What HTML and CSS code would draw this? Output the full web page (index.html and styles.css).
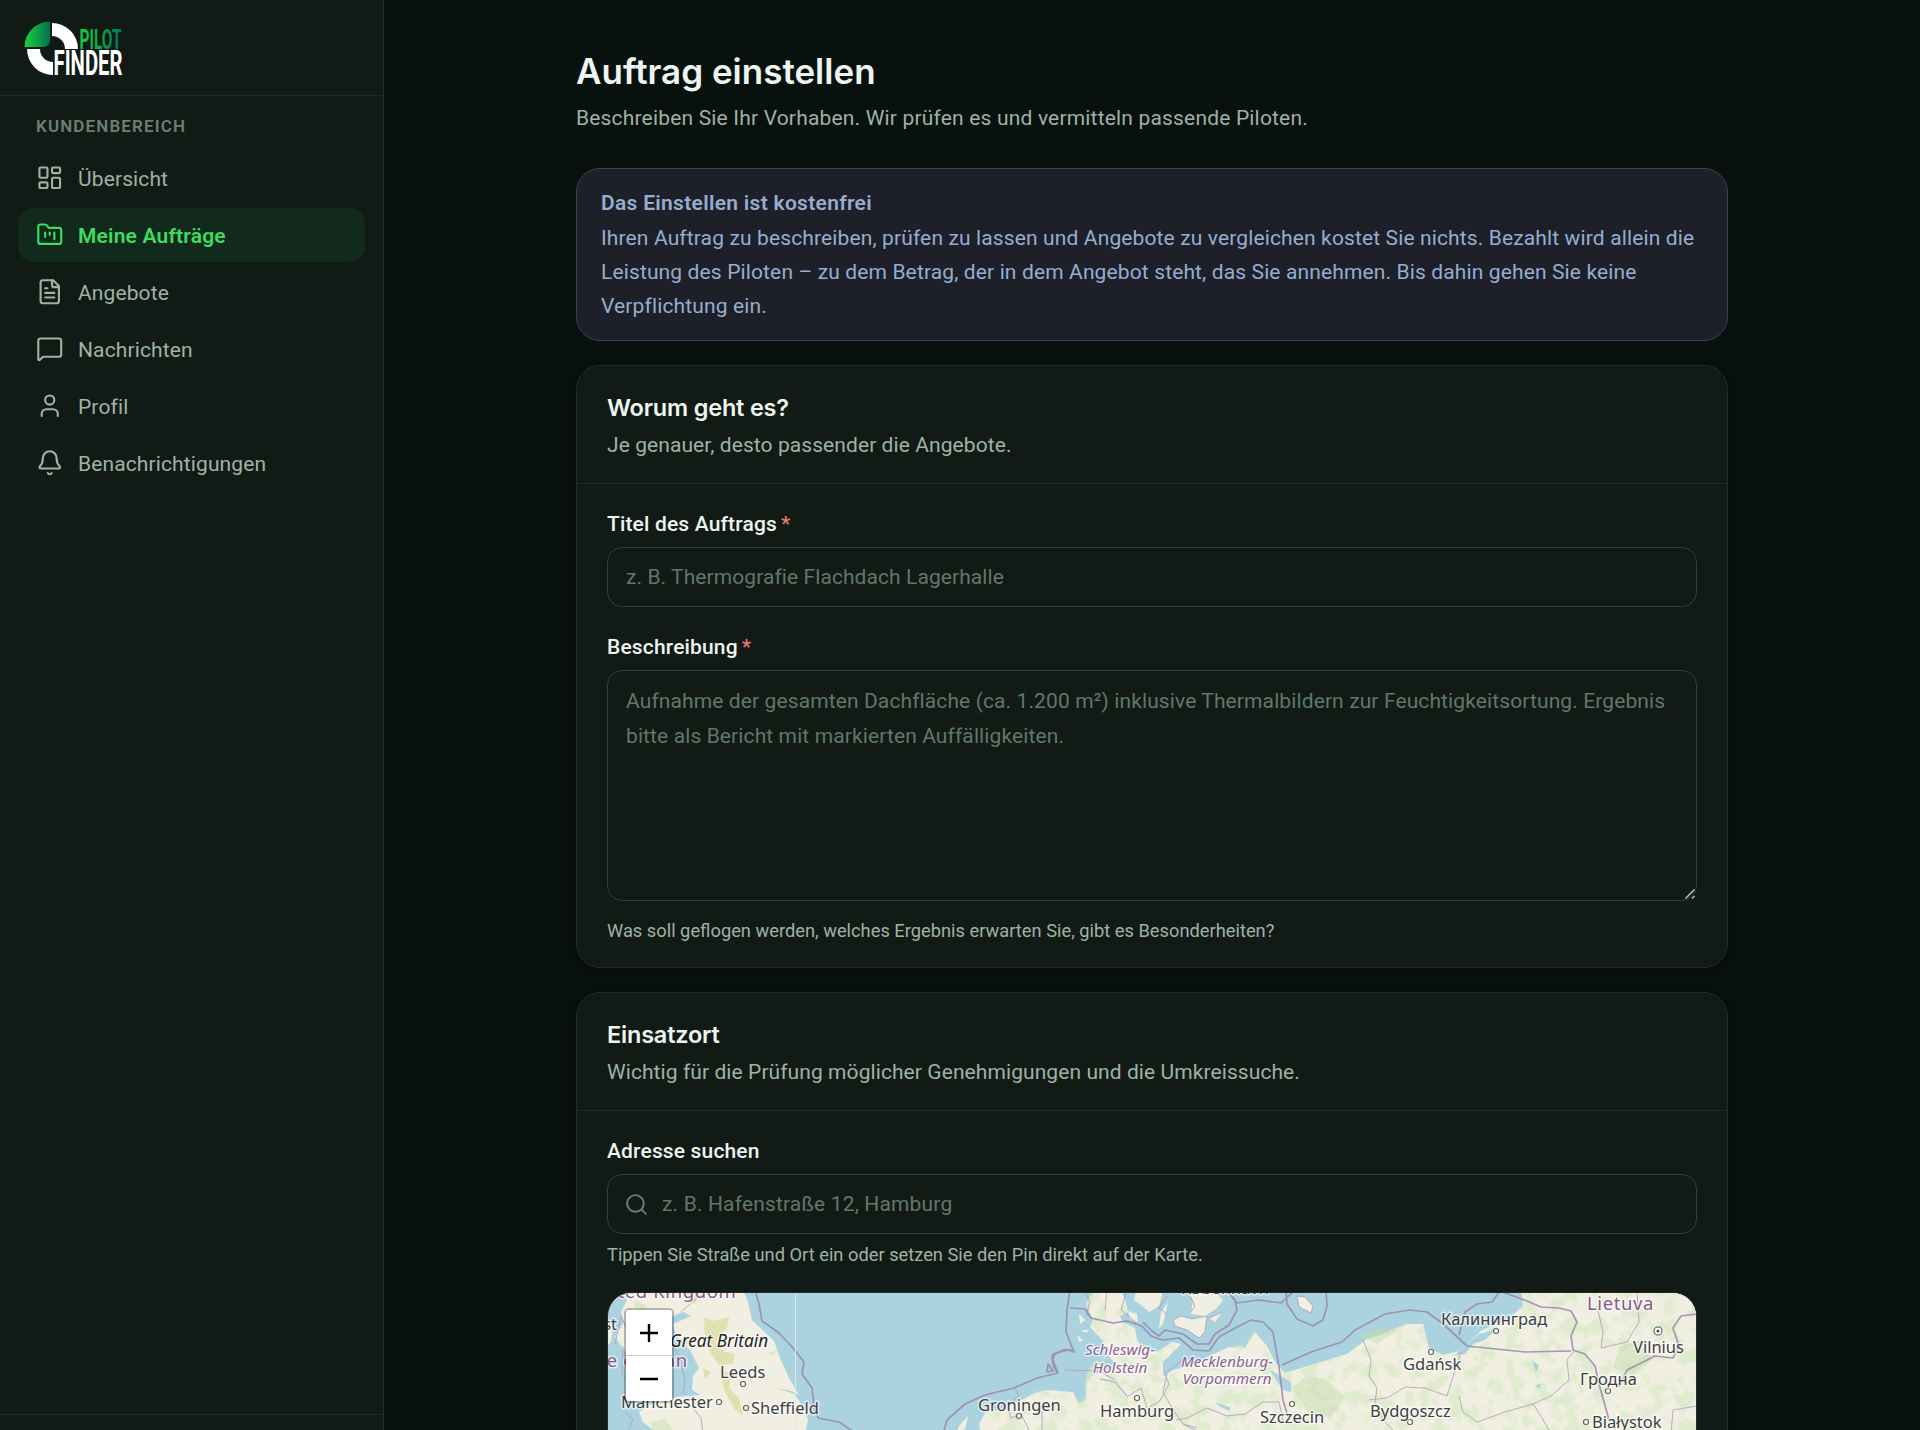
FILE: index.html
```html
<!DOCTYPE html>
<html lang="de">
<head>
    <meta charset="UTF-8">
    <meta name="viewport" content="width=device-width, initial-scale=1.0">
    <title>Auftrag einstellen – Pilotfinder</title>
    <link rel="stylesheet" href="styles.css">
</head>
<body>
    <aside class="sidebar">
        <div class="sidebar-header">
            <svg class="logo" width="100" height="56" viewBox="0 0 100 56">
                <defs>
                    <linearGradient id="logo-blade" x1="0" y1="0" x2="1" y2="0">
                        <stop offset="0" stop-color="#18d13d"/>
                        <stop offset="1" stop-color="#03714f"/>
                    </linearGradient>
                    <linearGradient id="logo-word" x1="0" y1="0" x2="1" y2="0">
                        <stop offset="0" stop-color="#17cf3a"/>
                        <stop offset="1" stop-color="#04755a"/>
                    </linearGradient>
                </defs>
                <path fill="url(#logo-blade)" d="M.5 27A25.500 25.500 0 0 1 26 1.500V20a7 7 0 0 1-7 7z"/>
                <path fill="#fff" d="M28 3a26 26 0 0 1 26 26H41A13 13 0 0 0 28 16z"/>
                <path fill="#fff" d="M3 29h13a13 13 0 0 0 13 13v13A26 26 0 0 1 3 29z"/>
                <text class="logo-pilot" x="55.500" y="28.800" textLength="42" lengthAdjust="spacingAndGlyphs" fill="url(#logo-word)">PILOT</text>
                <text class="logo-finder" x="29.500" y="54.800" textLength="69" lengthAdjust="spacingAndGlyphs">FINDER</text>
            </svg>
        </div>
        <nav class="nav">
            <p class="nav-label">Kundenbereich</p>
            <a class="nav-item" href="#">
                <svg class="icon" viewBox="0 0 24 24"><rect x="3" y="3" width="7" height="9" rx="1"/><rect x="14" y="3" width="7" height="5" rx="1"/><rect x="14" y="12" width="7" height="9" rx="1"/><rect x="3" y="16" width="7" height="5" rx="1"/></svg>
                <span>Übersicht</span>
            </a>
            <a class="nav-item active" href="#">
                <svg class="icon" viewBox="0 0 24 24"><path d="M4 20h16a2 2 0 0 0 2-2V8a2 2 0 0 0-2-2h-7.930a2 2 0 0 1-1.660-.900l-.820-1.200A2 2 0 0 0 7.930 3H4a2 2 0 0 0-2 2v13c0 1.100.900 2 2 2z"/><path d="M8 10v4"/><path d="M12 10v2"/><path d="M16 10v6"/></svg>
                <span>Meine Aufträge</span>
            </a>
            <a class="nav-item" href="#">
                <svg class="icon" viewBox="0 0 24 24"><path d="M15 2H6a2 2 0 0 0-2 2v16a2 2 0 0 0 2 2h12a2 2 0 0 0 2-2V7z"/><path d="M14 2v4a2 2 0 0 0 2 2h4"/><path d="M10 9H8"/><path d="M16 13H8"/><path d="M16 17H8"/></svg>
                <span>Angebote</span>
            </a>
            <a class="nav-item" href="#">
                <svg class="icon" viewBox="0 0 24 24"><path d="M22 17a2 2 0 0 1-2 2H6.830a2 2 0 0 0-1.420.590l-2.200 2.200A.710.710 0 0 1 2 21.290V5a2 2 0 0 1 2-2h16a2 2 0 0 1 2 2z"/></svg>
                <span>Nachrichten</span>
            </a>
            <a class="nav-item" href="#">
                <svg class="icon" viewBox="0 0 24 24"><path d="M19 21v-2a4 4 0 0 0-4-4H9a4 4 0 0 0-4 4v2"/><circle cx="12" cy="7" r="4"/></svg>
                <span>Profil</span>
            </a>
            <a class="nav-item" href="#">
                <svg class="icon" viewBox="0 0 24 24"><path d="M10.268 21a2 2 0 0 0 3.464 0"/><path d="M3.262 15.326A1 1 0 0 0 4 17h16a1 1 0 0 0 .740-1.673C19.410 13.956 18 12.499 18 8A6 6 0 0 0 6 8c0 4.499-1.411 5.956-2.738 7.326"/></svg>
                <span>Benachrichtigungen</span>
            </a>
        </nav>
        <div class="sidebar-footer"></div>
    </aside>

    <main class="main">
        <div class="content">
            <header class="page-header">
                <h1>Auftrag einstellen</h1>
                <p class="lead">Beschreiben Sie Ihr Vorhaben. Wir prüfen es und vermitteln passende Piloten.</p>
            </header>

            <div class="notice">
                <p class="notice-title">Das Einstellen ist kostenfrei</p>
                <p class="notice-text">Ihren Auftrag zu beschreiben, prüfen zu lassen und Angebote zu vergleichen kostet Sie nichts. Bezahlt wird allein die Leistung des Piloten – zu dem Betrag, der in dem Angebot steht, das Sie annehmen. Bis dahin gehen Sie keine Verpflichtung ein.</p>
            </div>

            <section class="card">
                <div class="card-header">
                    <h2>Worum geht es?</h2>
                    <p class="lead-small">Je genauer, desto passender die Angebote.</p>
                </div>
                <div class="card-body">
                    <div class="field">
                        <label for="titel">Titel des Auftrags<span class="required">*</span></label>
                        <input type="text" id="titel" placeholder="z. B. Thermografie Flachdach Lagerhalle">
                    </div>
                    <div class="field">
                        <label for="beschreibung">Beschreibung<span class="required">*</span></label>
                        <div class="textarea-wrap">
                            <textarea id="beschreibung" placeholder="Aufnahme der gesamten Dachfläche (ca. 1.200 m²) inklusive Thermalbildern zur Feuchtigkeitsortung. Ergebnis bitte als Bericht mit markierten Auffälligkeiten."></textarea>
                            <svg class="grip" width="12" height="12" viewBox="0 0 12 12"><path d="M1.500 10.500l9-9M8 10.500l2.500-2.500"/></svg>
                        </div>
                        <p class="hint hint-textarea">Was soll geflogen werden, welches Ergebnis erwarten Sie, gibt es Besonderheiten?</p>
                    </div>
                </div>
            </section>

            <section class="card">
                <div class="card-header">
                    <h2>Einsatzort</h2>
                    <p class="lead-small">Wichtig für die Prüfung möglicher Genehmigungen und die Umkreissuche.</p>
                </div>
                <div class="card-body">
                    <div class="field">
                        <label for="adresse">Adresse suchen</label>
                        <div class="search">
                            <svg class="search-icon" viewBox="0 0 24 24"><circle cx="11" cy="11" r="8"/><path d="m21 21-4.300-4.300"/></svg>
                            <input type="text" id="adresse" placeholder="z. B. Hafenstraße 12, Hamburg">
                        </div>
                        <p class="hint hint-ort">Tippen Sie Straße und Ort ein oder setzen Sie den Pin direkt auf der Karte.</p>
                    </div>
                    <div class="map">
                        <svg class="map-tiles" width="1088" height="498" viewBox="1 1 1088 498">
                            <defs>
                                <filter id="forest" x="0" y="0" width="100%" height="100%">
                                    <feTurbulence type="fractalNoise" baseFrequency=".07" numOctaves="5" seed="8"/>
                                    <feColorMatrix values="0 0 0 0 .68  0 0 0 0 .82  0 0 0 0 .56  0 5 0 0 -2.300"/>
                                </filter>
                                <clipPath id="land-east">
                                    <path d="M489 -5L479 12 486 28 483 35 496 49 500 62 484 72 478 88 477 106 470 110 463 98 428 99 417 107 395 117 378 121 372 132 360 142H1095V-5H914L916 14 900 28 875 38 862 50 852 59 836 63 822 56 816 32 800 32 775 42 760 47 740 62 720 68 678 81 666 70 655 50 645 38 640 52 622 55 600 65 590 72 566 78 556 84 556 70 570 54 565 50 550 60 530 48 528 36 515 30 510 26 520 20 512 0 515 -5z"/>
                                </clipPath>
                            </defs>
                            <!-- Land -->
                            <g class="land">
                                <path d="M15 -5L20 8 14 20 17 30 8 45 20 62 40 48 52 30 76 20 84 24 66 32 69 44 76 50 84 60 92 76 86 84 85 98 93 103 70 105 46 111 32 120 36 130 46 138 48 142H198L201 128 196 115 188 102 168 96 184 99 192 103 182 86 173 66 167 49 145 28 141 10 135 -5z"/>
                                <path d="M0 32L6 36 4 50 0 54z"/>
                                <path d="M489 -5L479 12 486 28 483 35 496 49 500 62 510 74 484 84 479 92 479 108 472 112 466 100 440 98 428 101 417 107 395 117 378 121 372 132 374 142H1095V-5H914L916 14 900 28 875 38 862 50 852 59 836 63 822 56 816 32 800 32 775 42 760 47 740 62 720 68 678 81 668 70 660 54 648 40 644 46 638 56 622 55 600 65 590 72 566 78 556 84 556 70 568 58 574 52 565 50 550 60 535 55 530 48 528 36 515 30 513 24 521 20 518 8 512 -5z"/>
                                <path d="M530 -5L527 8 535 14 542 20 552 14 557 -5z"/>
                                <path d="M521 19L530 22 531 30 523 27z"/>
                                <path d="M561 10L556 32 552 36 554 20z"/>
                                <path d="M576 -5L586 8 584 22 598 24 610 16 616 8 608 0 606 -5z"/>
                                <path d="M566 28L574 24 585 27 600 24 598 40 592 46 580 38 568 34z"/>
                                <path d="M602 26L616 20 608 30z"/>
                                <path d="M690 4L698 5 706 14 704 21 692 15z"/>
                                <path d="M472 22L478 28 473 32zM474 38L482 38 479 41zM470 43L476 48 472 50z"/>
                                <path d="M352 134L361 124 358 137 350 142z"/>
                            </g>
                            <rect class="forest" x="370" y="0" width="720" height="142" filter="url(#forest)" clip-path="url(#land-east)"/>
                            <!-- Hochland in England -->
                            <g class="upland">
                                <path d="M97 25L106 29 122 25 120 36 108 50 118 60 128 62 126 72 112 73 104 62 98 46z"/>
                                <path d="M112 76L124 82 122 96 132 106 136 124 128 118 118 100z"/>
                                <path d="M80 -4L92 2 88 12 78 8zM74 46L84 50 78 54zM96 76L104 80 98 88z"/>
                            </g>
                            <g class="woods">
                                <path d="M28 8L40 14 36 18 27 15zM160 62L170 57 166 64zM42 131L58 127 66 138 48 140z"/>
                                <path d="M1012 55L1034 48 1044 68 1026 82 1006 76z"/>
                                <path d="M684 96L700 84 720 88 738 104 724 126 700 118zM752 44L770 36 790 38 770 52z"/>
                            </g>
                            <g class="lakes">
                                <path d="M852 59L872 42 888 38 878 48 866 52 858 62 848 63z"/>
                                <path d="M663 78L684 90 684 100 676 98 668 86z"/>
                                <path d="M925 68L932 74 929 80zM928 94L935 91 932 97zM608 110L624 116 622 119 612 114z"/>
                                <path d="M493 87L508 90 520 104" class="river"/>
                            </g>
                            <!-- Grenzen -->
                            <g class="border">
                                <path d="M148 -2L152 12 155 29 172 41 186 56 197 70 195 82 205 96 207 114 211 126 232 130 250 142"/>
                                <path d="M336 142L340 128 358 112 378 103 407 96 430 86 451 81 445 66 446 62 461 58 467 60 459 40 460 18 463 -2"/>
                                <path d="M451 81C443 72 444 62 454 59Q461 56 467 60M441 72L446 79 440 80z"/>
                                <path d="M463 16L478 17 484 26 506 31 520 29 535 34 544 44 555 48 572 46 586 58 602 59 612 45 630 35 644 28 656 30 666 40 672 75 676 108 681 125"/>
                                <path d="M536 30L545 39 552 44 558 38 576 42 590 52 602 52 608 42 622 33 630 18 628 8 620 -2"/>
                                <path d="M621 0L630 11 652 8 674 11 688 -2"/>
                                <path d="M679 -2L680 12 690 27 706 34 716 28 720 14 719 -2"/>
                                <path d="M675 73L704 60 735 50 748 38 778 22 803 18 820 20 835 31 860 54"/>
                                <path d="M852 43L858 20 870 12 885 10 893 -1 920 9 934 15 952 16 964 19 970 30 964 44 966 58 978 62 988 74 992 92 1002 128"/>
                                <path d="M860 54L918 60 964 59"/>
                                <path d="M1012 95L1020 78 1032 72 1048 64 1066 66 1072 54 1066 36 1074 24 1090 22"/>
                            </g>
                            <g class="region">
                                <path d="M8 52L14 24 24 46M16 54L15 82 22 90M68 56L74 68 78 90 76 102M18 120L26 128 20 142M74 20L90 6 96 2M86 116L94 126 96 142"/>
                                <path d="M406 94L412 104 400 114 404 126 414 122 424 142M435 110V142"/>
                                <path d="M458 78L492 79 508 88M520 105L534 96 540 116 552 110 562 92 558 82 580 64"/>
                                <path d="M569 128L580 126 600 116 620 124 638 122 656 110 672 110 676 128"/>
                                <path d="M560 82L556 100 566 118 576 132 596 142M576 132L590 136"/>
                                <path d="M756 48L764 68 762 84 770 96 768 110 776 128 790 142"/>
                                <path d="M762 108L780 106 798 95 818 96 840 104 854 60M852 104L856 120 870 130 898 120 926 112 944 104 962 88 960 68 968 58"/>
                                <path d="M926 112L934 124 944 142M990 14L996 40 994 56 1020 50 1032 30 1030 0M1064 142L1066 118 1090 114"/>
                            </g>
                            <path class="coast" d="M477 -2L483 10 479 24M500 -2L498 18M520 -2L514 18 524 26 530 32M560 4L552 16 560 22M582 2L588 14 584 20M566 28L574 24 585 27 600 24 598 40 592 46 580 38 568 34zM602 26L616 20M690 4L698 5 706 14 704 21 692 15z"/>
                            <path class="tile-seam" d="M188.500 0V142"/>
                            <g class="places">
                                <circle cx="136" cy="92" r="2.500"/><circle cx="112" cy="110" r="2.500"/><circle cx="139" cy="116" r="2.500"/>
                                <circle cx="412" cy="124" r="2.500"/><circle cx="530" cy="106" r="2.500"/><circle cx="685" cy="112" r="2.500"/>
                                <circle cx="803" cy="130" r="2.500"/><circle cx="824" cy="60" r="2.500"/><circle cx="889" cy="39" r="2.500"/>
                                <circle cx="1001" cy="99" r="2.500"/><circle cx="979" cy="130" r="2.500"/><circle cx="1051" cy="39" r="4"/>
                                <circle class="dot" cx="1051" cy="39" r="1.500"/>
                            </g>
                            <g class="city">
                                <text x="-43" y="38">Belfast</text>
                                <text x="113" y="85.500">Leeds</text>
                                <text x="14" y="116">Manchester</text>
                                <text x="144" y="122">Sheffield</text>
                                <text x="371" y="119">Groningen</text>
                                <text x="493" y="124.500">Hamburg</text>
                                <text x="574" y="1.500">København</text>
                                <text x="653" y="131">Szczecin</text>
                                <text x="763" y="125">Bydgoszcz</text>
                                <text x="796" y="78">Gdańsk</text>
                                <text x="834" y="33">Калининград</text>
                                <text x="1026" y="61">Vilnius</text>
                                <text x="973" y="93">Гродна</text>
                                <text x="985" y="136">Białystok</text>
                            </g>
                            <g class="country">
                                <text x="-21" y="6">United Kingdom</text>
                                <text x="-22" y="75">Isle of Man</text>
                                <text x="980" y="17.500">Lietuva</text>
                            </g>
                            <text class="island" x="63" y="54.500">Great Britain</text>
                            <g class="state">
                                <text x="513" y="63">Schleswig-</text>
                                <text x="513" y="81">Holstein</text>
                                <text x="620" y="75">Mecklenburg-</text>
                                <text x="620" y="92">Vorpommern</text>
                            </g>
                        </svg>
                        <div class="zoom-control">
                            <a class="zoom-button" href="#"><svg width="20" height="20" viewBox="0 0 20 20"><path d="M1 10h18M10 1v18"/></svg></a>
                            <a class="zoom-button" href="#"><svg width="20" height="20" viewBox="0 0 20 20"><path d="M1 10h18"/></svg></a>
                        </div>
                    </div>
                </div>
            </section>
        </div>
    </main>
</body>
</html>
```
FILE: styles.css
```css
* {
    box-sizing: border-box;
}
body {
    margin: 0;
    height: 1430px;
    display: flex;
    overflow: hidden;
    font-family: Roboto, "Noto Sans", sans-serif;
    font-size: 21px;
    line-height: 34px;
    color: #edf5f0;
    background-color: #08110d;
}
h1, h2, p {
    margin: 0;
}

/* Seitenleiste */
.sidebar {
    display: flex;
    flex-direction: column;
    flex: none;
    width: 384px;
    background-color: #121a16;
    border-right: 1px solid #222b26;
}
.sidebar-header {
    height: 96px;
    padding: 20px 24px;
    border-bottom: 1px solid #222b26;
}
.logo {
    display: block;
}
.logo-pilot,
.logo-finder {
    font-family: "Liberation Sans Narrow", Roboto, sans-serif;
    font-weight: 700;
    font-size: 27px;
}
.logo-finder {
    font-size: 35px;
    fill: #fff;
}
.nav {
    display: flex;
    flex-direction: column;
    flex: 1;
    gap: 3px;
    padding: 18px;
}
.nav-label {
    padding-left: 18px;
    margin-bottom: 10px;
    font-size: 17px;
    font-weight: 600;
    line-height: 24px;
    letter-spacing: 1.13px;
    text-transform: uppercase;
    color: #6a8073;
}
.nav-item {
    display: flex;
    align-items: center;
    gap: 14.5px;
    height: 54px;
    padding: 0 18px;
    border-radius: 15px;
    color: #9db3a6;
    letter-spacing: 0.12px;
    text-decoration: none;
}
.nav-item span {
    padding-top: 2px;
}
.nav-item.active {
    background-color: #112a1b;
    color: #3ddc62;
    font-weight: 600;
    letter-spacing: 0.18px;
}
.icon {
    width: 27.5px;
    height: 27.5px;
    fill: none;
    stroke: currentColor;
    stroke-width: 1.85;
    stroke-linecap: round;
    stroke-linejoin: round;
}
.sidebar-footer {
    height: 16px;
    border-top: 1px solid #222b26;
}

/* Inhalt */
.main {
    flex: 1;
    display: flex;
    justify-content: center;
    min-width: 0;
}
.content {
    width: 1152px;
    padding-top: 50px;
}
.page-header {
    margin-bottom: 33px;
}
h1 {
    font-family: Inter, sans-serif;
    font-size: 35px;
    font-weight: 600;
    line-height: 42px;
    margin-bottom: 9px;
}
.lead,
.lead-small {
    color: #9db3a6;
}
.lead {
    letter-spacing: 0.18px;
}
.lead-small {
    letter-spacing: 0.08px;
}
.notice {
    padding: 17px 24px;
    margin-bottom: 24px;
    border: 1px solid #3a4150;
    border-radius: 24px;
    background-color: #1d2029;
    color: #97add0;
    letter-spacing: 0.13px;
}
.notice-title {
    font-weight: 600;
    margin-bottom: 1px;
    letter-spacing: 0.3px;
}
.card {
    margin-bottom: 24px;
    border: 1px solid #212a25;
    border-radius: 24px;
    background-color: #121a16;
    box-shadow: 0 2px 10px rgba(0, 0, 0, 0.4);
}
.card-header {
    padding: 27px 30px 21px;
    border-bottom: 1px solid #212a25;
}
h2 {
    font-family: Inter, sans-serif;
    font-size: 23.5px;
    font-weight: 600;
    line-height: 30px;
    letter-spacing: -0.2px;
    margin-bottom: 5px;
}
.card-body {
    display: flex;
    flex-direction: column;
    gap: 25px;
    padding: 25px 30px 24px;
}
.field {
    display: flex;
    flex-direction: column;
}
label {
    font-weight: 500;
    line-height: 30px;
    letter-spacing: 0.16px;
    margin-bottom: 8px;
}
.required {
    margin-left: 4px;
    color: #f0776c;
}
input,
textarea {
    width: 100%;
    height: 60px;
    padding: 0 18px;
    border: 1px solid #2b4136;
    border-radius: 15px;
    outline: none;
    background-color: transparent;
    color: #edf5f0;
    font: inherit;
    letter-spacing: 0.08px;
}
.textarea-wrap {
    position: relative;
    height: 231px;
}
textarea {
    display: block;
    height: 231px;
    padding: 13px 18px;
    line-height: 35px;
    letter-spacing: 0.11px;
    resize: none;
}
.grip {
    position: absolute;
    right: 1px;
    bottom: 1px;
    fill: none;
    stroke: #b5b8b6;
    stroke-width: 1.6;
}
::placeholder {
    color: #5f7869;
    opacity: 1;
}
.hint {
    font-size: 18.3px;
    line-height: 24px;
    color: #9db3a6;
}
.hint-textarea {
    margin-top: 18px;
}
.hint-ort {
    margin-top: 9px;
}
.search {
    display: flex;
    align-items: center;
    height: 60px;
    padding-left: 16px;
    border: 1px solid #2b4136;
    border-radius: 15px;
}
.search input {
    border: none;
    padding: 0 13px;
    letter-spacing: 0.16px;
}
.search-icon {
    flex: none;
    width: 25px;
    height: 25px;
    fill: none;
    stroke: #6a8073;
    stroke-width: 1.85;
    stroke-linecap: round;
}

/* Karte */
.map {
    position: relative;
    height: 500px;
    border: 1px solid #212a25;
    border-radius: 24px;
    overflow: hidden;
    background-color: #aad3df;
}
.map-tiles {
    display: block;
    font-family: "Noto Sans", sans-serif;
}
.land {
    fill: #f1efe2;
}
.upland {
    fill: #d9dc9e;
    opacity: 0.75;
}
.woods {
    fill: #c4dcab;
    opacity: 0.45;
}
.forest {
    opacity: 0.75;
}
.lakes {
    fill: #aad3df;
}
.lakes .river {
    fill: none;
    stroke: #a5c4dc;
    stroke-width: 1.5;
}
.border,
.region,
.coast {
    fill: none;
    stroke: #9c86ab;
    stroke-width: 1.7;
    stroke-linejoin: round;
    opacity: 0.85;
}
.region {
    stroke: #b79bba;
    stroke-width: 1;
}
.coast {
    stroke-width: 0.7;
}
.tile-seam {
    stroke: #dde5e6;
    stroke-width: 1;
}
.places {
    fill: #fff;
    stroke: #5b5b5b;
    stroke-width: 1.1;
}
.places .dot {
    fill: #444;
    stroke: none;
}
.map text {
    paint-order: stroke;
    stroke: rgba(255, 255, 255, 0.65);
    stroke-width: 3px;
    stroke-linejoin: round;
}
.city {
    font-size: 16.5px;
    fill: #3f3f3f;
}
.country {
    font-size: 18.5px;
    letter-spacing: 0.6px;
    fill: #85588b;
}
.island {
    font-size: 17.2px;
    font-style: italic;
    fill: #222;
}
.state {
    font-size: 15.2px;
    font-style: italic;
    fill: #8d6194;
    text-anchor: middle;
}
.zoom-control {
    position: absolute;
    top: 15px;
    left: 15.5px;
    border: 2.5px solid rgba(0, 0, 0, 0.25);
    border-radius: 5px;
    background-clip: padding-box;
}
.zoom-button {
    display: flex;
    align-items: center;
    justify-content: center;
    width: 46px;
    height: 45px;
    background-color: #fff;
    border-radius: 0 0 3px 3px;
}
.zoom-button:first-child {
    height: 46px;
    border-bottom: 1px solid #ccc;
    border-radius: 3px 3px 0 0;
}
.zoom-button svg {
    fill: none;
    stroke: #000;
    stroke-width: 2.4;
}
```
